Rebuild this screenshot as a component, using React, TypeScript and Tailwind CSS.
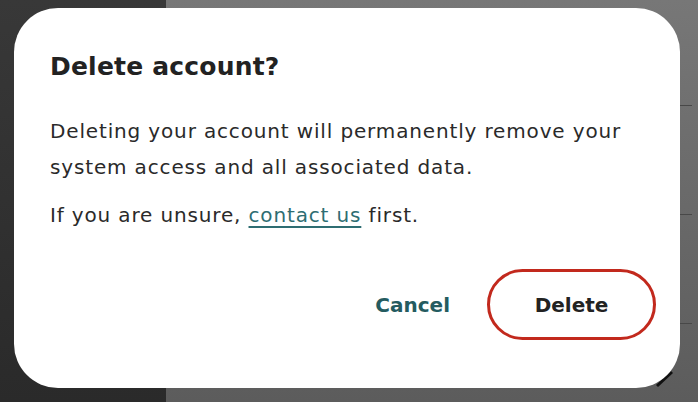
import React from "react";

const font = { fontFamily: '"DejaVu Sans", "Open Sans", sans-serif' };

function BackdropRows() {
  return (
    <div className="flex h-full flex-1 flex-col bg-gradient-to-b from-[#777777] to-[#5c5c5c] pr-[6px]">
      <div className="h-[106px] border-b border-[#484848]" />
      <div className="h-[109px] border-b border-[#484848]" />
      <div className="h-[109px] border-b border-[#484848]" />
      <div className="flex flex-1 justify-end pr-[18px] pt-[41px]">
        <svg width="24" height="24" viewBox="0 0 24 24">
          <line x1="7" y1="21" x2="22" y2="7" stroke="#111" strokeWidth="3" />
        </svg>
      </div>
    </div>
  );
}

export default function App() {
  return (
    <div className="relative flex h-[402px] w-full overflow-hidden" style={font}>
      <div className="h-full w-[166px] bg-gradient-to-b from-[#383838] to-[#2a2a2a]" />
      <BackdropRows />

      <div
        role="dialog"
        className="absolute left-[14px] top-[8px] flex h-[380px] w-[666px] flex-col rounded-[44px] bg-white pl-[36px] pr-[24px] pt-[43px]"
      >
        <h2 className="text-[25px] font-bold leading-[32px] tracking-[0.2px] text-[#222222]">
          Delete account?
        </h2>
        <div className="mt-[30px] flex flex-col gap-[12px] text-[20px] leading-[36px] tracking-[0.85px] text-[#2a2a2a]">
          <p>
            Deleting your account will permanently remove your system access
            and all associated data.
          </p>
          <p>
            If you are unsure,{" "}
            <a href="#" className="text-[#2e6d72] underline underline-offset-4">
              contact us
            </a>{" "}
            first.
          </p>
        </div>
        <div className="mt-[36px] flex items-center justify-end gap-[37px]">
          <button className="text-[20px] font-bold text-[#245b60]">Cancel</button>
          <button className="flex h-[71px] w-[169px] items-center justify-center rounded-full border-[3px] border-[#c2291d] text-[20px] font-bold text-[#222222]">
            Delete
          </button>
        </div>
      </div>
    </div>
  );
}
